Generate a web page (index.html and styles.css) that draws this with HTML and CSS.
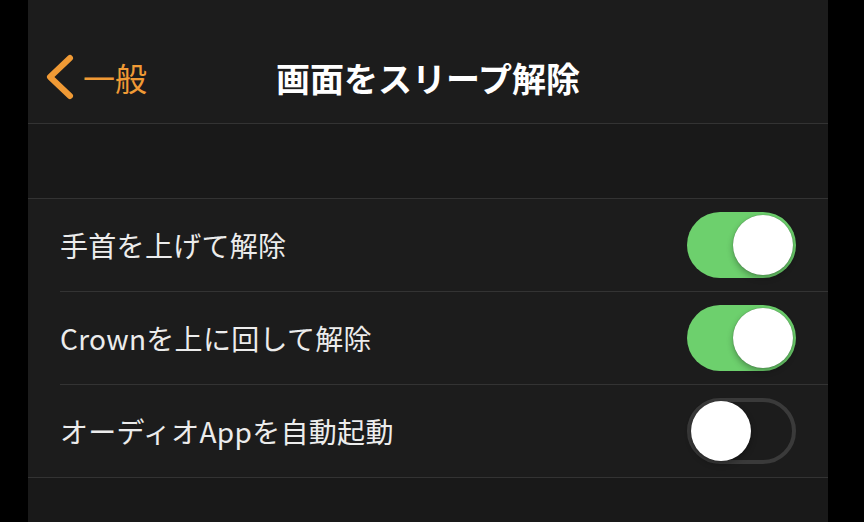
FILE: index.html
```html
<!DOCTYPE html>
<html lang="ja">
<head>
    <meta charset="UTF-8">
    <meta name="viewport" content="width=device-width, initial-scale=1.0">
    <title>画面をスリープ解除</title>
    <link rel="stylesheet" href="styles.css">
</head>
<body>
    <div class="screen">
        <div class="navbar">
            <a href="#general" class="back">
                <svg class="chevron" width="30" height="48" viewBox="0 0 30 48">
                    <polyline points="25,5 5,24 25,43" fill="none" stroke="#f09a35" stroke-width="6" stroke-linecap="round" stroke-linejoin="round"/>
                </svg>
                <span>一般</span>
            </a>
            <h1>画面をスリープ解除</h1>
            <div></div>
        </div>

        <div class="spacer"></div>

        <div class="group">
            <div class="row">
                <div class="row-inner">
                    <span class="label">手首を上げて解除</span>
                    <div class="toggle on"><div class="knob"></div></div>
                </div>
            </div>
            <div class="row">
                <div class="row-inner">
                    <span class="label">Crownを上に回して解除</span>
                    <div class="toggle on"><div class="knob"></div></div>
                </div>
            </div>
            <div class="row">
                <div class="row-inner">
                    <span class="label">オーディオAppを自動起動</span>
                    <div class="toggle"><div class="knob"></div></div>
                </div>
            </div>
        </div>
    </div>
</body>
</html>
```

FILE: styles.css
```css
* {
    margin: 0;
    padding: 0;
    box-sizing: border-box;
}

body {
    font-family: 'Noto Sans CJK JP', 'Noto Sans', sans-serif;
    background-color: #000000;
    color: #ffffff;
    height: 522px;
    overflow: hidden;
    padding-left: 28px;
}

.screen {
    width: 800px;
    height: 522px;
    background-color: #191919;
}

.navbar {
    height: 124px;
    padding-top: 32px;
    background-color: #1c1c1c;
    border-bottom: 1px solid #333333;
    display: grid;
    grid-template-columns: 1fr auto 1fr;
    align-items: start;
}

.navbar h1 {
    height: 90px;
    display: flex;
    align-items: center;
    font-size: 34px;
    font-weight: 700;
    color: #ffffff;
}

.back {
    height: 90px;
    display: flex;
    align-items: center;
    gap: 8px;
    padding-left: 17px;
    color: #f09a35;
    text-decoration: none;
    font-size: 32px;
}

.chevron {
    display: block;
}

.spacer {
    height: 74px;
}

.group {
    background-color: #1c1c1c;
    border-top: 1px solid #333333;
    border-bottom: 1px solid #333333;
}

.row {
    padding-left: 32px;
}

.row-inner {
    height: 93px;
    padding-right: 32px;
    display: flex;
    align-items: center;
    justify-content: space-between;
    border-bottom: 1px solid #333333;
}

.row:last-child .row-inner {
    height: 92px;
    border-bottom: none;
}

.label {
    font-size: 28px;
    letter-spacing: 0.3px;
    color: #ececec;
}

.toggle {
    width: 109px;
    height: 66px;
    border-radius: 33px;
    border: 4px solid #3a3a3a;
    background-color: transparent;
    display: flex;
    align-items: center;
    justify-content: flex-start;
}

.toggle.on {
    background-color: #6dd06d;
    border: none;
    padding: 0 3px;
    justify-content: flex-end;
}

.knob {
    width: 60px;
    height: 60px;
    border-radius: 50%;
    background-color: #ffffff;
    box-shadow: 0 3px 6px rgba(0, 0, 0, 0.3), 0 0 1px rgba(0, 0, 0, 0.4);
}
```
